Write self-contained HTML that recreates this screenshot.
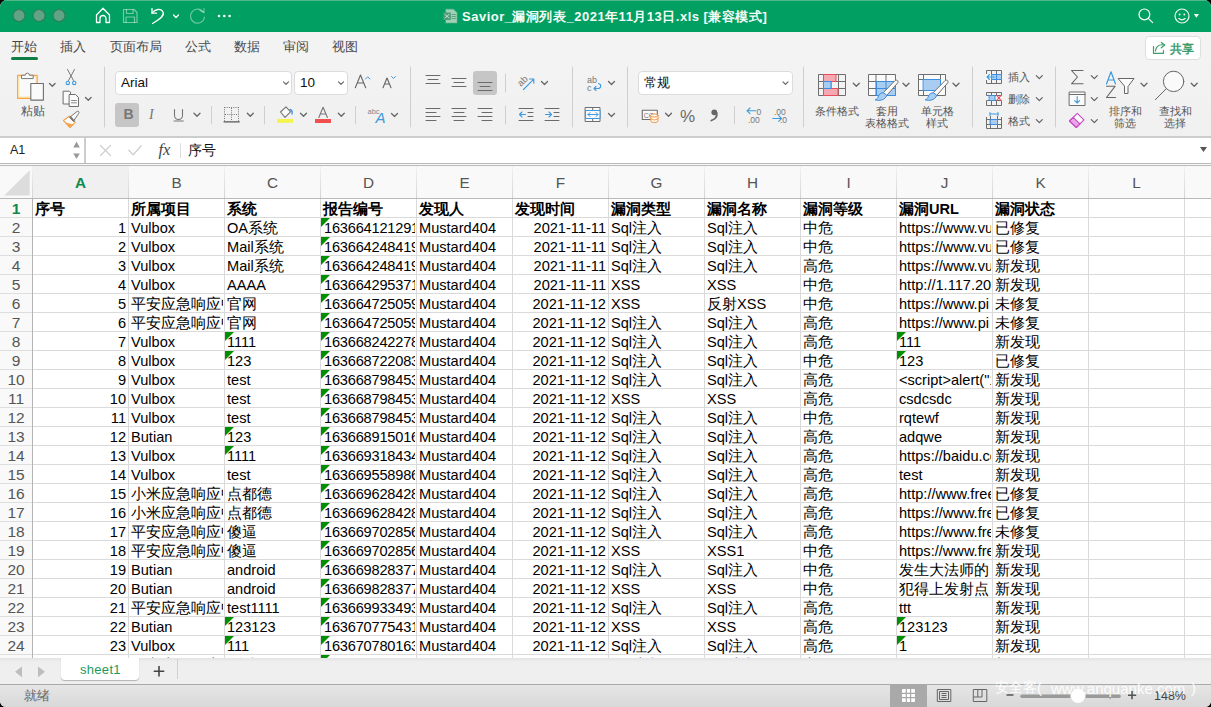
<!DOCTYPE html>
<html><head><meta charset="utf-8">
<style>
*{box-sizing:border-box}
html,body{margin:0;padding:0}
body{width:1211px;height:707px;overflow:hidden;position:relative;background:#000;font-family:"Liberation Sans",sans-serif;}
.a{position:absolute}
#win{position:absolute;left:0;top:0;width:1211px;height:707px;background:#f3f3f3;border-radius:7px 7px 6px 6px;overflow:hidden}
#title{position:absolute;left:0;top:0;width:1211px;height:32px;background:#01a062;border-top:1px solid #4fb888}
#ttxt{position:absolute;left:462px;top:7px;color:#f4fbf7;font-weight:bold;font-size:13px;white-space:nowrap;letter-spacing:0.5px}
.tab{position:absolute;top:39px;font-size:12.8px;color:#4a4a4a;white-space:nowrap}
#fbar{position:absolute;left:0;top:136px;width:1211px;height:27px;background:#fff;border-top:2px solid #cdcdcd}
#sheet{z-index:0;position:absolute;left:0;top:163px;width:1211px;height:495px;background:#fff;overflow:hidden}
#grid{position:absolute;left:32px;top:35px;width:1179px;height:460px;
 background-image:linear-gradient(to right,#dadada 1px,transparent 1px),linear-gradient(to bottom,#dadada 1px,transparent 1px);
 background-size:96px 19px;background-position:0 0}
#colh{z-index:2;position:absolute;left:0;top:0;width:1211px;height:36px;background:#f9f9f9;border-top:3px double #b9b9b9;border-bottom:1px solid #b9b9b9}
#rowh{z-index:1;position:absolute;left:0;top:35px;width:33px;height:460px;background:#f9f9f9;border-right:1px solid #b4b4b4;
 background-image:linear-gradient(to bottom,#dedede 1px,transparent 1px);background-size:32px 19px}
.ch{position:absolute;top:0;width:97px;height:32px;line-height:33px;text-align:center;font-size:15.3px;color:#555;background:linear-gradient(#f2f2f2,#d4d4d4) left top/1px 100% no-repeat}
.rn{position:absolute;left:0;width:32px;height:19px;line-height:22px;text-align:center;font-size:15.5px;color:#555}
.g{color:#0f8a4f;font-weight:bold}
.c{position:absolute;width:95px;height:19px;line-height:23px;font-size:14.6px;color:#000;white-space:nowrap;overflow:hidden;padding:0 2px 0 3px}
.c.r{text-align:right;padding-right:1px}
.c.b{font-weight:bold}
.z{font-size:15.2px;line-height:0}
.t{position:absolute;width:0;height:0;border-top:9px solid #008f00;border-right:9px solid transparent}
#tabbar{position:absolute;left:0;top:658px;width:1211px;height:26px;background:linear-gradient(#e3e3e3,#efefef 4px)}
#status{position:absolute;left:0;top:684px;width:1211px;height:23px;background:linear-gradient(#e6e6e6,#d8d8d8);border-top:1px solid #a9a9a9}
.lbl{position:absolute;font-size:10.6px;color:#555;white-space:nowrap;text-align:center;line-height:11.5px}
.box{position:absolute;background:#fff;border:1px solid #dcdcdc;border-radius:4px;font-size:12.5px;color:#111}
</style></head><body>
<div id="win">
<div class="a" style="left:0;top:64px;width:1211px;height:72px;background:linear-gradient(#f3f3f3,#f0f0f0)"></div>
<div id="title">
 <div id="ttxt">Savior_漏洞列表_2021年11月13日.xls [兼容模式]</div>
</div>
 <div class="tab" style="left:11px;color:#444">开始</div>
 <div class="a" style="left:11px;top:57px;width:27px;height:3px;border-radius:2px;background:#0f7d44"></div>
 <div class="tab" style="left:60px">插入</div>
 <div class="tab" style="left:110px">页面布局</div>
 <div class="tab" style="left:185px">公式</div>
 <div class="tab" style="left:234px">数据</div>
 <div class="tab" style="left:283px">审阅</div>
 <div class="tab" style="left:332px">视图</div>
 <div class="box" style="left:115px;top:71px;width:177px;height:24px;padding:3px 0 0 5px;font-size:13.5px">Arial</div>
<div class="box" style="left:294px;top:71px;width:54px;height:24px;padding:3px 0 0 5px;font-size:13.5px">10</div>
<div class="box" style="left:638px;top:71px;width:155px;height:24px;padding:3px 0 0 5px">常规</div>
<div class="a" style="left:115px;top:103px;width:24px;height:24px;background:#c6c6c6;border-radius:3px"></div>
<div class="a" style="left:473px;top:71px;width:24px;height:24px;background:#c6c6c6;border-radius:3px"></div>
<div class="lbl" style="left:18px;top:106px;width:30px;font-size:11.5px">粘贴</div>
<div class="lbl" style="left:807px;top:106px;width:60px">条件格式</div>
<div class="lbl" style="left:857px;top:106px;width:60px">套用<br>表格格式</div>
<div class="lbl" style="left:907px;top:106px;width:60px">单元格<br>样式</div>
<div class="lbl" style="left:1095px;top:106px;width:60px">排序和<br>筛选</div>
<div class="lbl" style="left:1145px;top:106px;width:60px">查找和<br>选择</div>
<div class="lbl" style="left:1008px;top:72px;font-size:11px">插入</div>
<div class="lbl" style="left:1008px;top:94px;font-size:11px">删除</div>
<div class="lbl" style="left:1008px;top:116px;font-size:11px">格式</div>
<div class="a" style="left:1145px;top:36px;width:56px;height:24px;background:#fff;border:1px solid #dedede;border-radius:4px"></div>
<div class="a" style="left:1170px;top:41px;font-size:12px;font-weight:bold;color:#3c9c6c">共享</div>

<div id="fbar">
 <div class="a" style="left:0;top:0;width:86px;height:26px;background:#fff;border-right:2px solid #cdcdcd"></div>
 <div class="a" style="left:10px;top:5px;font-size:12.5px;color:#222">A1</div>
 <div class="a" style="left:188px;top:4px;font-size:14px;color:#111">序号</div>
</div>
<div id="sheet">
 <div id="colh">
 <div class="a" style="left:33px;top:0;width:95px;height:32px;background:#f0f0f0"></div>
<div class="ch g" style="left:32px">A</div>
<div class="ch" style="left:128px">B</div>
<div class="ch" style="left:224px">C</div>
<div class="ch" style="left:320px">D</div>
<div class="ch" style="left:416px">E</div>
<div class="ch" style="left:512px">F</div>
<div class="ch" style="left:608px">G</div>
<div class="ch" style="left:704px">H</div>
<div class="ch" style="left:800px">I</div>
<div class="ch" style="left:896px">J</div>
<div class="ch" style="left:992px">K</div>
<div class="ch" style="left:1088px">L</div>
<div class="ch" style="left:1184px">M</div>
 </div>
 <div id="rowh"></div>
 <div class="a" style="left:0;top:35px;width:32px;height:20px;background:#f0f0f0;border-bottom:1px solid #dedede"></div>
 <div id="grid"></div>
 <div id="cells" class="a" style="z-index:3;left:0;top:-163px;width:1211px;height:658px">
<div class="c b" style="left:32px;top:198px"><span class="z">序号</span></div>
<div class="c b" style="left:128px;top:198px"><span class="z">所属项目</span></div>
<div class="c b" style="left:224px;top:198px"><span class="z">系统</span></div>
<div class="c b" style="left:320px;top:198px"><span class="z">报告编号</span></div>
<div class="c b" style="left:416px;top:198px"><span class="z">发现人</span></div>
<div class="c b" style="left:512px;top:198px"><span class="z">发现时间</span></div>
<div class="c b" style="left:608px;top:198px"><span class="z">漏洞类型</span></div>
<div class="c b" style="left:704px;top:198px"><span class="z">漏洞名称</span></div>
<div class="c b" style="left:800px;top:198px"><span class="z">漏洞等级</span></div>
<div class="c b" style="left:896px;top:198px"><span class="z">漏洞</span>URL</div>
<div class="c b" style="left:992px;top:198px"><span class="z">漏洞状态</span></div>
<div class="c r" style="left:32px;top:217px">1</div>
<div class="c" style="left:128px;top:217px">Vulbox</div>
<div class="c" style="left:224px;top:217px">OA<span class="z">系统</span></div>
<div class="c" style="left:320px;top:217px;letter-spacing:-0.2px;padding-left:4px">163664121291</div>
<div class="c" style="left:416px;top:217px">Mustard404</div>
<div class="c r" style="left:512px;top:217px">2021-11-11</div>
<div class="c" style="left:608px;top:217px">Sql<span class="z">注入</span></div>
<div class="c" style="left:704px;top:217px">Sql<span class="z">注入</span></div>
<div class="c" style="left:800px;top:217px"><span class="z">中危</span></div>
<div class="c" style="left:896px;top:217px">https://www.vulbox.com</div>
<div class="c" style="left:992px;top:217px"><span class="z">已修复</span></div>
<div class="t" style="left:321px;top:218px"></div>
<div class="c r" style="left:32px;top:236px">2</div>
<div class="c" style="left:128px;top:236px">Vulbox</div>
<div class="c" style="left:224px;top:236px">Mail<span class="z">系统</span></div>
<div class="c" style="left:320px;top:236px;letter-spacing:-0.2px;padding-left:4px">163664248419</div>
<div class="c" style="left:416px;top:236px">Mustard404</div>
<div class="c r" style="left:512px;top:236px">2021-11-11</div>
<div class="c" style="left:608px;top:236px">Sql<span class="z">注入</span></div>
<div class="c" style="left:704px;top:236px">Sql<span class="z">注入</span></div>
<div class="c" style="left:800px;top:236px"><span class="z">中危</span></div>
<div class="c" style="left:896px;top:236px">https://www.vulbox.com</div>
<div class="c" style="left:992px;top:236px"><span class="z">已修复</span></div>
<div class="t" style="left:321px;top:237px"></div>
<div class="c r" style="left:32px;top:255px">3</div>
<div class="c" style="left:128px;top:255px">Vulbox</div>
<div class="c" style="left:224px;top:255px">Mail<span class="z">系统</span></div>
<div class="c" style="left:320px;top:255px;letter-spacing:-0.2px;padding-left:4px">163664248419</div>
<div class="c" style="left:416px;top:255px">Mustard404</div>
<div class="c r" style="left:512px;top:255px">2021-11-11</div>
<div class="c" style="left:608px;top:255px">Sql<span class="z">注入</span></div>
<div class="c" style="left:704px;top:255px">Sql<span class="z">注入</span></div>
<div class="c" style="left:800px;top:255px"><span class="z">高危</span></div>
<div class="c" style="left:896px;top:255px">https://www.vulbox.com</div>
<div class="c" style="left:992px;top:255px"><span class="z">新发现</span></div>
<div class="t" style="left:321px;top:256px"></div>
<div class="c r" style="left:32px;top:274px">4</div>
<div class="c" style="left:128px;top:274px">Vulbox</div>
<div class="c" style="left:224px;top:274px">AAAA</div>
<div class="c" style="left:320px;top:274px;letter-spacing:-0.2px;padding-left:4px">163664295371</div>
<div class="c" style="left:416px;top:274px">Mustard404</div>
<div class="c r" style="left:512px;top:274px">2021-11-11</div>
<div class="c" style="left:608px;top:274px">XSS</div>
<div class="c" style="left:704px;top:274px">XSS</div>
<div class="c" style="left:800px;top:274px"><span class="z">中危</span></div>
<div class="c" style="left:896px;top:274px">http://1.117.20.1</div>
<div class="c" style="left:992px;top:274px"><span class="z">新发现</span></div>
<div class="t" style="left:321px;top:275px"></div>
<div class="c r" style="left:32px;top:293px">5</div>
<div class="c" style="left:128px;top:293px"><span class="z">平安应急响应中心</span></div>
<div class="c" style="left:224px;top:293px"><span class="z">官网</span></div>
<div class="c" style="left:320px;top:293px;letter-spacing:-0.2px;padding-left:4px">163664725059</div>
<div class="c" style="left:416px;top:293px">Mustard404</div>
<div class="c r" style="left:512px;top:293px">2021-11-12</div>
<div class="c" style="left:608px;top:293px">XSS</div>
<div class="c" style="left:704px;top:293px"><span class="z">反射</span>XSS</div>
<div class="c" style="left:800px;top:293px"><span class="z">中危</span></div>
<div class="c" style="left:896px;top:293px">https://www.pi</div>
<div class="c" style="left:992px;top:293px"><span class="z">未修复</span></div>
<div class="t" style="left:321px;top:294px"></div>
<div class="c r" style="left:32px;top:312px">6</div>
<div class="c" style="left:128px;top:312px"><span class="z">平安应急响应中心</span></div>
<div class="c" style="left:224px;top:312px"><span class="z">官网</span></div>
<div class="c" style="left:320px;top:312px;letter-spacing:-0.2px;padding-left:4px">163664725059</div>
<div class="c" style="left:416px;top:312px">Mustard404</div>
<div class="c r" style="left:512px;top:312px">2021-11-12</div>
<div class="c" style="left:608px;top:312px">Sql<span class="z">注入</span></div>
<div class="c" style="left:704px;top:312px">Sql<span class="z">注入</span></div>
<div class="c" style="left:800px;top:312px"><span class="z">高危</span></div>
<div class="c" style="left:896px;top:312px">https://www.pi</div>
<div class="c" style="left:992px;top:312px"><span class="z">未修复</span></div>
<div class="t" style="left:321px;top:313px"></div>
<div class="c r" style="left:32px;top:331px">7</div>
<div class="c" style="left:128px;top:331px">Vulbox</div>
<div class="c" style="left:224px;top:331px">1111</div>
<div class="c" style="left:320px;top:331px;letter-spacing:-0.2px;padding-left:4px">163668242278</div>
<div class="c" style="left:416px;top:331px">Mustard404</div>
<div class="c r" style="left:512px;top:331px">2021-11-12</div>
<div class="c" style="left:608px;top:331px">Sql<span class="z">注入</span></div>
<div class="c" style="left:704px;top:331px">Sql<span class="z">注入</span></div>
<div class="c" style="left:800px;top:331px"><span class="z">高危</span></div>
<div class="c" style="left:896px;top:331px">111</div>
<div class="c" style="left:992px;top:331px"><span class="z">新发现</span></div>
<div class="t" style="left:321px;top:332px"></div>
<div class="t" style="left:225px;top:332px"></div>
<div class="t" style="left:897px;top:332px"></div>
<div class="c r" style="left:32px;top:350px">8</div>
<div class="c" style="left:128px;top:350px">Vulbox</div>
<div class="c" style="left:224px;top:350px">123</div>
<div class="c" style="left:320px;top:350px;letter-spacing:-0.2px;padding-left:4px">163668722083</div>
<div class="c" style="left:416px;top:350px">Mustard404</div>
<div class="c r" style="left:512px;top:350px">2021-11-12</div>
<div class="c" style="left:608px;top:350px">Sql<span class="z">注入</span></div>
<div class="c" style="left:704px;top:350px">Sql<span class="z">注入</span></div>
<div class="c" style="left:800px;top:350px"><span class="z">中危</span></div>
<div class="c" style="left:896px;top:350px">123</div>
<div class="c" style="left:992px;top:350px"><span class="z">已修复</span></div>
<div class="t" style="left:321px;top:351px"></div>
<div class="t" style="left:225px;top:351px"></div>
<div class="t" style="left:897px;top:351px"></div>
<div class="c r" style="left:32px;top:369px">9</div>
<div class="c" style="left:128px;top:369px">Vulbox</div>
<div class="c" style="left:224px;top:369px">test</div>
<div class="c" style="left:320px;top:369px;letter-spacing:-0.2px;padding-left:4px">163668798453</div>
<div class="c" style="left:416px;top:369px">Mustard404</div>
<div class="c r" style="left:512px;top:369px">2021-11-12</div>
<div class="c" style="left:608px;top:369px">Sql<span class="z">注入</span></div>
<div class="c" style="left:704px;top:369px">Sql<span class="z">注入</span></div>
<div class="c" style="left:800px;top:369px"><span class="z">高危</span></div>
<div class="c" style="left:896px;top:369px">&lt;script&gt;alert("1")</div>
<div class="c" style="left:992px;top:369px"><span class="z">新发现</span></div>
<div class="t" style="left:321px;top:370px"></div>
<div class="c r" style="left:32px;top:388px">10</div>
<div class="c" style="left:128px;top:388px">Vulbox</div>
<div class="c" style="left:224px;top:388px">test</div>
<div class="c" style="left:320px;top:388px;letter-spacing:-0.2px;padding-left:4px">163668798453</div>
<div class="c" style="left:416px;top:388px">Mustard404</div>
<div class="c r" style="left:512px;top:388px">2021-11-12</div>
<div class="c" style="left:608px;top:388px">XSS</div>
<div class="c" style="left:704px;top:388px">XSS</div>
<div class="c" style="left:800px;top:388px"><span class="z">高危</span></div>
<div class="c" style="left:896px;top:388px">csdcsdc</div>
<div class="c" style="left:992px;top:388px"><span class="z">新发现</span></div>
<div class="t" style="left:321px;top:389px"></div>
<div class="c r" style="left:32px;top:407px">11</div>
<div class="c" style="left:128px;top:407px">Vulbox</div>
<div class="c" style="left:224px;top:407px">test</div>
<div class="c" style="left:320px;top:407px;letter-spacing:-0.2px;padding-left:4px">163668798453</div>
<div class="c" style="left:416px;top:407px">Mustard404</div>
<div class="c r" style="left:512px;top:407px">2021-11-12</div>
<div class="c" style="left:608px;top:407px">Sql<span class="z">注入</span></div>
<div class="c" style="left:704px;top:407px">Sql<span class="z">注入</span></div>
<div class="c" style="left:800px;top:407px"><span class="z">中危</span></div>
<div class="c" style="left:896px;top:407px">rqtewf</div>
<div class="c" style="left:992px;top:407px"><span class="z">新发现</span></div>
<div class="t" style="left:321px;top:408px"></div>
<div class="c r" style="left:32px;top:426px">12</div>
<div class="c" style="left:128px;top:426px">Butian</div>
<div class="c" style="left:224px;top:426px">123</div>
<div class="c" style="left:320px;top:426px;letter-spacing:-0.2px;padding-left:4px">163668915016</div>
<div class="c" style="left:416px;top:426px">Mustard404</div>
<div class="c r" style="left:512px;top:426px">2021-11-12</div>
<div class="c" style="left:608px;top:426px">Sql<span class="z">注入</span></div>
<div class="c" style="left:704px;top:426px">Sql<span class="z">注入</span></div>
<div class="c" style="left:800px;top:426px"><span class="z">高危</span></div>
<div class="c" style="left:896px;top:426px">adqwe</div>
<div class="c" style="left:992px;top:426px"><span class="z">新发现</span></div>
<div class="t" style="left:321px;top:427px"></div>
<div class="t" style="left:225px;top:427px"></div>
<div class="c r" style="left:32px;top:445px">13</div>
<div class="c" style="left:128px;top:445px">Vulbox</div>
<div class="c" style="left:224px;top:445px">1111</div>
<div class="c" style="left:320px;top:445px;letter-spacing:-0.2px;padding-left:4px">163669318434</div>
<div class="c" style="left:416px;top:445px">Mustard404</div>
<div class="c r" style="left:512px;top:445px">2021-11-12</div>
<div class="c" style="left:608px;top:445px">Sql<span class="z">注入</span></div>
<div class="c" style="left:704px;top:445px">Sql<span class="z">注入</span></div>
<div class="c" style="left:800px;top:445px"><span class="z">高危</span></div>
<div class="c" style="left:896px;top:445px">https://baidu.com</div>
<div class="c" style="left:992px;top:445px"><span class="z">新发现</span></div>
<div class="t" style="left:321px;top:446px"></div>
<div class="t" style="left:225px;top:446px"></div>
<div class="c r" style="left:32px;top:464px">14</div>
<div class="c" style="left:128px;top:464px">Vulbox</div>
<div class="c" style="left:224px;top:464px">test</div>
<div class="c" style="left:320px;top:464px;letter-spacing:-0.2px;padding-left:4px">163669558986</div>
<div class="c" style="left:416px;top:464px">Mustard404</div>
<div class="c r" style="left:512px;top:464px">2021-11-12</div>
<div class="c" style="left:608px;top:464px">Sql<span class="z">注入</span></div>
<div class="c" style="left:704px;top:464px">Sql<span class="z">注入</span></div>
<div class="c" style="left:800px;top:464px"><span class="z">高危</span></div>
<div class="c" style="left:896px;top:464px">test</div>
<div class="c" style="left:992px;top:464px"><span class="z">新发现</span></div>
<div class="t" style="left:321px;top:465px"></div>
<div class="c r" style="left:32px;top:483px">15</div>
<div class="c" style="left:128px;top:483px"><span class="z">小米应急响应中心</span></div>
<div class="c" style="left:224px;top:483px"><span class="z">点都德</span></div>
<div class="c" style="left:320px;top:483px;letter-spacing:-0.2px;padding-left:4px">163669628428</div>
<div class="c" style="left:416px;top:483px">Mustard404</div>
<div class="c r" style="left:512px;top:483px">2021-11-12</div>
<div class="c" style="left:608px;top:483px">Sql<span class="z">注入</span></div>
<div class="c" style="left:704px;top:483px">Sql<span class="z">注入</span></div>
<div class="c" style="left:800px;top:483px"><span class="z">高危</span></div>
<div class="c" style="left:896px;top:483px">http://www.freebuf</div>
<div class="c" style="left:992px;top:483px"><span class="z">已修复</span></div>
<div class="t" style="left:321px;top:484px"></div>
<div class="c r" style="left:32px;top:502px">16</div>
<div class="c" style="left:128px;top:502px"><span class="z">小米应急响应中心</span></div>
<div class="c" style="left:224px;top:502px"><span class="z">点都德</span></div>
<div class="c" style="left:320px;top:502px;letter-spacing:-0.2px;padding-left:4px">163669628428</div>
<div class="c" style="left:416px;top:502px">Mustard404</div>
<div class="c r" style="left:512px;top:502px">2021-11-12</div>
<div class="c" style="left:608px;top:502px">Sql<span class="z">注入</span></div>
<div class="c" style="left:704px;top:502px">Sql<span class="z">注入</span></div>
<div class="c" style="left:800px;top:502px"><span class="z">高危</span></div>
<div class="c" style="left:896px;top:502px">https://www.freebuf</div>
<div class="c" style="left:992px;top:502px"><span class="z">已修复</span></div>
<div class="t" style="left:321px;top:503px"></div>
<div class="c r" style="left:32px;top:521px">17</div>
<div class="c" style="left:128px;top:521px"><span class="z">平安应急响应中心</span></div>
<div class="c" style="left:224px;top:521px"><span class="z">傻逼</span></div>
<div class="c" style="left:320px;top:521px;letter-spacing:-0.2px;padding-left:4px">163669702856</div>
<div class="c" style="left:416px;top:521px">Mustard404</div>
<div class="c r" style="left:512px;top:521px">2021-11-12</div>
<div class="c" style="left:608px;top:521px">Sql<span class="z">注入</span></div>
<div class="c" style="left:704px;top:521px">Sql<span class="z">注入</span></div>
<div class="c" style="left:800px;top:521px"><span class="z">高危</span></div>
<div class="c" style="left:896px;top:521px">https://www.freebuf</div>
<div class="c" style="left:992px;top:521px"><span class="z">未修复</span></div>
<div class="t" style="left:321px;top:522px"></div>
<div class="c r" style="left:32px;top:540px">18</div>
<div class="c" style="left:128px;top:540px"><span class="z">平安应急响应中心</span></div>
<div class="c" style="left:224px;top:540px"><span class="z">傻逼</span></div>
<div class="c" style="left:320px;top:540px;letter-spacing:-0.2px;padding-left:4px">163669702856</div>
<div class="c" style="left:416px;top:540px">Mustard404</div>
<div class="c r" style="left:512px;top:540px">2021-11-12</div>
<div class="c" style="left:608px;top:540px">XSS</div>
<div class="c" style="left:704px;top:540px">XSS1</div>
<div class="c" style="left:800px;top:540px"><span class="z">中危</span></div>
<div class="c" style="left:896px;top:540px">https://www.freebuf</div>
<div class="c" style="left:992px;top:540px"><span class="z">新发现</span></div>
<div class="t" style="left:321px;top:541px"></div>
<div class="c r" style="left:32px;top:559px">19</div>
<div class="c" style="left:128px;top:559px">Butian</div>
<div class="c" style="left:224px;top:559px">android</div>
<div class="c" style="left:320px;top:559px;letter-spacing:-0.2px;padding-left:4px">163669828377</div>
<div class="c" style="left:416px;top:559px">Mustard404</div>
<div class="c r" style="left:512px;top:559px">2021-11-12</div>
<div class="c" style="left:608px;top:559px">Sql<span class="z">注入</span></div>
<div class="c" style="left:704px;top:559px">Sql<span class="z">注入</span></div>
<div class="c" style="left:800px;top:559px"><span class="z">中危</span></div>
<div class="c" style="left:896px;top:559px"><span class="z">发生大法师的</span></div>
<div class="c" style="left:992px;top:559px"><span class="z">新发现</span></div>
<div class="t" style="left:321px;top:560px"></div>
<div class="c r" style="left:32px;top:578px">20</div>
<div class="c" style="left:128px;top:578px">Butian</div>
<div class="c" style="left:224px;top:578px">android</div>
<div class="c" style="left:320px;top:578px;letter-spacing:-0.2px;padding-left:4px">163669828377</div>
<div class="c" style="left:416px;top:578px">Mustard404</div>
<div class="c r" style="left:512px;top:578px">2021-11-12</div>
<div class="c" style="left:608px;top:578px">XSS</div>
<div class="c" style="left:704px;top:578px">XSS</div>
<div class="c" style="left:800px;top:578px"><span class="z">中危</span></div>
<div class="c" style="left:896px;top:578px"><span class="z">犯得上发射点</span></div>
<div class="c" style="left:992px;top:578px"><span class="z">新发现</span></div>
<div class="t" style="left:321px;top:579px"></div>
<div class="c r" style="left:32px;top:597px">21</div>
<div class="c" style="left:128px;top:597px"><span class="z">平安应急响应中心</span></div>
<div class="c" style="left:224px;top:597px">test1111</div>
<div class="c" style="left:320px;top:597px;letter-spacing:-0.2px;padding-left:4px">163669933493</div>
<div class="c" style="left:416px;top:597px">Mustard404</div>
<div class="c r" style="left:512px;top:597px">2021-11-12</div>
<div class="c" style="left:608px;top:597px">Sql<span class="z">注入</span></div>
<div class="c" style="left:704px;top:597px">Sql<span class="z">注入</span></div>
<div class="c" style="left:800px;top:597px"><span class="z">高危</span></div>
<div class="c" style="left:896px;top:597px">ttt</div>
<div class="c" style="left:992px;top:597px"><span class="z">新发现</span></div>
<div class="t" style="left:321px;top:598px"></div>
<div class="c r" style="left:32px;top:616px">22</div>
<div class="c" style="left:128px;top:616px">Butian</div>
<div class="c" style="left:224px;top:616px">123123</div>
<div class="c" style="left:320px;top:616px;letter-spacing:-0.2px;padding-left:4px">163670775431</div>
<div class="c" style="left:416px;top:616px">Mustard404</div>
<div class="c r" style="left:512px;top:616px">2021-11-12</div>
<div class="c" style="left:608px;top:616px">XSS</div>
<div class="c" style="left:704px;top:616px">XSS</div>
<div class="c" style="left:800px;top:616px"><span class="z">高危</span></div>
<div class="c" style="left:896px;top:616px">123123</div>
<div class="c" style="left:992px;top:616px"><span class="z">新发现</span></div>
<div class="t" style="left:321px;top:617px"></div>
<div class="t" style="left:225px;top:617px"></div>
<div class="t" style="left:897px;top:617px"></div>
<div class="c r" style="left:32px;top:635px">23</div>
<div class="c" style="left:128px;top:635px">Vulbox</div>
<div class="c" style="left:224px;top:635px">111</div>
<div class="c" style="left:320px;top:635px;letter-spacing:-0.2px;padding-left:4px">163670780163</div>
<div class="c" style="left:416px;top:635px">Mustard404</div>
<div class="c r" style="left:512px;top:635px">2021-11-12</div>
<div class="c" style="left:608px;top:635px">Sql<span class="z">注入</span></div>
<div class="c" style="left:704px;top:635px">Sql<span class="z">注入</span></div>
<div class="c" style="left:800px;top:635px"><span class="z">高危</span></div>
<div class="c" style="left:896px;top:635px">1</div>
<div class="c" style="left:992px;top:635px"><span class="z">新发现</span></div>
<div class="t" style="left:321px;top:636px"></div>
<div class="t" style="left:225px;top:636px"></div>
<div class="t" style="left:897px;top:636px"></div>
<div class="c r" style="left:32px;top:654px">24</div>
<div class="c" style="left:128px;top:654px"><span class="z">平安应急响应中心</span></div>
<div class="c" style="left:224px;top:654px"><span class="z">测试</span></div>
<div class="c" style="left:320px;top:654px;letter-spacing:-0.2px;padding-left:4px">163670780163</div>
<div class="c" style="left:416px;top:654px">Mustard404</div>
<div class="c r" style="left:512px;top:654px">2021-11-12</div>
<div class="c" style="left:608px;top:654px">Sql<span class="z">注入</span></div>
<div class="c" style="left:704px;top:654px">Sql<span class="z">注入</span></div>
<div class="c" style="left:800px;top:654px"><span class="z">高危</span></div>
<div class="c" style="left:896px;top:654px">1</div>
<div class="c" style="left:992px;top:654px"><span class="z">新发现</span></div>
<div class="t" style="left:321px;top:655px"></div>
<div class="rn g" style="top:198px">1</div>
<div class="rn" style="top:217px">2</div>
<div class="rn" style="top:236px">3</div>
<div class="rn" style="top:255px">4</div>
<div class="rn" style="top:274px">5</div>
<div class="rn" style="top:293px">6</div>
<div class="rn" style="top:312px">7</div>
<div class="rn" style="top:331px">8</div>
<div class="rn" style="top:350px">9</div>
<div class="rn" style="top:369px">10</div>
<div class="rn" style="top:388px">11</div>
<div class="rn" style="top:407px">12</div>
<div class="rn" style="top:426px">13</div>
<div class="rn" style="top:445px">14</div>
<div class="rn" style="top:464px">15</div>
<div class="rn" style="top:483px">16</div>
<div class="rn" style="top:502px">17</div>
<div class="rn" style="top:521px">18</div>
<div class="rn" style="top:540px">19</div>
<div class="rn" style="top:559px">20</div>
<div class="rn" style="top:578px">21</div>
<div class="rn" style="top:597px">22</div>
<div class="rn" style="top:616px">23</div>
<div class="rn" style="top:635px">24</div>
<div class="rn" style="top:654px">25</div>
 </div>
</div>
<div id="tabbar">
 <div class="a" style="left:61px;top:0;width:78px;height:22px;background:#fff;border-radius:0 0 4px 4px;box-shadow:0 1px 1px rgba(0,0,0,0.25)"></div>
 <div class="a" style="left:80px;top:4px;font-size:13px;color:#1d9a5c;letter-spacing:0.3px">sheet1</div>
 <div class="a" style="left:177px;top:1px;width:1px;height:20px;background:#d0d0d0"></div>
</div>
<div id="status">
 <div class="a" style="left:24px;top:2px;font-size:13px;color:#666">就绪</div>
 <div class="a" style="left:890px;top:0;width:37px;height:23px;background:#a9a9a9"></div>
 <div class="a" style="left:1154px;top:4px;font-size:12.5px;color:#444">148%</div>
</div>
<svg class="a" style="left:0;top:0" width="1211" height="707" viewBox="0 0 1211 707" fill="none" stroke-linecap="round" stroke-linejoin="round">
<!-- traffic lights -->
<g fill="#62a386" stroke="#2f7f59" stroke-width="1.1">
<circle cx="19" cy="15.5" r="6"/><circle cx="39" cy="15.5" r="6"/><circle cx="59" cy="15.5" r="6"/>
</g>
<!-- home -->
<g stroke="#fff" stroke-width="1.3">
<path d="M96.5 15 L103 8.3 L109.5 15 V22.5 H106 V18.5 A3 3 0 0 0 100 18.5 V22.5 H96.5 Z"/>
</g>
<!-- save disabled -->
<g stroke="rgba(255,255,255,0.45)" stroke-width="1.2">
<path d="M123.5 9.5 H134 L137 12.5 V22.5 H123.5 Z"/><path d="M126.5 9.5 V13.5 H133 V9.5"/><path d="M126 22.5 V17 H134.5 V22.5"/>
</g>
<!-- undo -->
<g stroke="#fff" stroke-width="1.3">
<path d="M152 13 C155 9,161 8,163 12 C164.5 15,162 18,152.5 23.5"/><path d="M152 8.5 V13.2 H156.5"/>
<path d="M173.5 15 L176 17.5 L178.5 15"/>
</g>
<!-- redo disabled -->
<g stroke="rgba(255,255,255,0.4)" stroke-width="1.2">
<path d="M203.5 12.5 A7 7 0 1 0 204.5 17"/><path d="M200 10.5 L204 12.5 L204 8.5"/>
</g>
<g fill="#fff"><circle cx="219" cy="16" r="1.3"/><circle cx="224.3" cy="16" r="1.3"/><circle cx="229.6" cy="16" r="1.3"/></g>
<!-- doc icon -->
<g>
<path d="M446 9.2 H453.5 L457 12.7 V23 H446 Z" fill="#9ed1b6" stroke="#6db391" stroke-width="0.6"/>
<rect x="443.3" y="12.5" width="7.5" height="7.5" fill="#4e9b76"/>
<path d="M445 14.5 L449 18 M449 14.5 L445 18" stroke="#cfe9dc" stroke-width="0.9"/>
<path d="M452 14.5 H455.5 M452 16.5 H455.5 M452 18.5 H455.5" stroke="#4e9b76" stroke-width="0.8"/>
</g>
<!-- search -->
<g stroke="#fff" stroke-width="1.2"><circle cx="1144.4" cy="14.4" r="5.4"/><path d="M1148.3 18.3 L1152.7 22.7"/></g>
<!-- smiley -->
<g stroke="#f0f8f4" stroke-width="1.2"><circle cx="1182" cy="16" r="7"/><path d="M1178.8 18.6 Q1182 21 1185.2 18.6"/></g>
<g fill="#f0f8f4"><circle cx="1179.6" cy="14.5" r="0.9"/><circle cx="1184.3" cy="14.5" r="0.9"/><path d="M1193.8 14 H1199 L1196.4 17.7 Z"/></g>

<!-- share icon -->
<g stroke="#3c9c6c" stroke-width="1.2"><path d="M1153.5 46.5 V53.3 H1163.5 V50.5"/><path d="M1155.5 51 C1156 46.5,1159 44.5,1163 44.8"/><path d="M1161.3 42.5 L1164.8 45 L1161.3 47.8"/></g>

<!-- separators -->
<g stroke="#cfcfcf" stroke-width="1">
<path d="M104.5 67 V127"/><path d="M410.5 67 V127"/><path d="M572.5 67 V127"/><path d="M627.5 67 V127"/><path d="M803.5 67 V127"/><path d="M972.5 67 V127"/><path d="M1055.5 67 V127"/>
<path d="M211.5 106.5 V124"/><path d="M264.5 106.5 V124"/><path d="M355.5 106.5 V124"/><path d="M505.5 74 V92"/><path d="M505.5 106 V124"/><path d="M734.5 106.5 V123.5"/>
</g>

<!-- clipboard -->
<rect x="17.6" y="75.4" width="19.6" height="23" fill="#fdebb8" stroke="#f5a34d" stroke-width="1.1"/>
<rect x="19.6" y="77.4" width="15.6" height="19" fill="#fafafa" stroke="none"/>
<path d="M21.5 78.2 V75.2 H25.3 A2 2 0 0 1 29.4 75.2 H33.2 V78.2 Z" fill="#fafafa" stroke="#7a7a7a" stroke-width="1"/>
<rect x="30.8" y="83.5" width="12.6" height="16.6" fill="#fafafa" stroke="#6e6e6e" stroke-width="1.1"/>
<!-- chevrons -->
<g stroke="#666" stroke-width="1.3">
<path d="M49.5 83.5 L52.3 86.3 L55.1 83.5"/>
<path d="M85.5 97.5 L88.3 100.3 L91.1 97.5"/>
<path d="M283.5 81.8 L286 84.3 L288.5 81.8" stroke-width="1.2"/>
<path d="M338.5 81.8 L341 84.3 L343.5 81.8" stroke-width="1.2"/>
<path d="M783 81.8 L785.5 84.3 L788 81.8" stroke-width="1.2"/>
<path d="M194 113.3 L197 116.3 L200 113.3"/>
<path d="M247.3 113.3 L250.3 116.3 L253.3 113.3"/>
<path d="M300.5 113.3 L303.5 116.3 L306.5 113.3"/>
<path d="M338.3 113.3 L341.3 116.3 L344.3 113.3"/>
<path d="M391.5 113.5 L394.5 116.5 L397.5 113.5"/>
<path d="M541.5 81.5 L544.5 84.5 L547.5 81.5"/>
<path d="M608.5 81.5 L611.5 84.5 L614.5 81.5"/>
<path d="M608.5 113.5 L611.5 116.5 L614.5 113.5"/>
<path d="M665.5 113.3 L668.5 116.3 L671.5 113.3"/>
<path d="M853.3 83.3 L856.3 86.3 L859.3 83.3"/>
<path d="M903 83.3 L906 86.3 L909 83.3"/>
<path d="M953 83.3 L956 86.3 L959 83.3"/>
<path d="M1036.3 75.6 L1039.3 78.6 L1042.3 75.6"/>
<path d="M1036.3 97.6 L1039.3 100.6 L1042.3 97.6"/>
<path d="M1036.3 119.6 L1039.3 122.6 L1042.3 119.6"/>
<path d="M1091.3 75.6 L1094.3 78.6 L1097.3 75.6"/>
<path d="M1091.3 97.6 L1094.3 100.6 L1097.3 97.6"/>
<path d="M1091.3 119.6 L1094.3 122.6 L1097.3 119.6"/>
<path d="M1141 83.3 L1144 86.3 L1147 83.3"/>
<path d="M1191.2 83.3 L1194.2 86.3 L1197.2 83.3"/>
</g>
<!-- scissors -->
<g stroke="#777" stroke-width="1"><path d="M67.5 69.5 L73.5 80.5 M74.5 69.5 L68.5 80.5"/></g>
<g stroke="#3d9ae0" stroke-width="1.1"><circle cx="67.8" cy="82.9" r="1.7"/><circle cx="74.2" cy="82.9" r="1.7"/></g>
<!-- copy -->
<g stroke="#6e6e6e" stroke-width="1" fill="#fafafa">
<path d="M63.5 91.2 H69.5 L70.5 92.2 V104 H63.5 Z"/>
<path d="M69.5 94.5 H75.5 L78.5 97.5 V106.5 H69.5 Z"/>
<path d="M71.5 100.5 H76.5 M71.5 102.8 H76.5" stroke-width="0.8"/>
</g>
<!-- format painter -->
<path d="M63.5 120.5 L69.5 116 L75.3 122.3 L70 127.4 Z" fill="#fafafa" stroke="#f5a04a" stroke-width="1.1"/>
<path d="M66.3 123.3 L73.2 124.8 L70 127.4 Z" fill="#f5a04a" stroke="#f5a04a" stroke-width="0.8"/>
<path d="M69.8 117.2 L77.2 111.4 C78.5 110.8,79.5 112,78.8 113.2 L73.6 121 Z" fill="#fafafa" stroke="#777" stroke-width="1"/>
<path d="M70.5 116.8 L74 121" stroke="#777" stroke-width="1.6"/>
<!-- font grow/shrink -->
<g stroke="#666" stroke-width="1.1"><path d="M355.3 87.8 L360.5 75 L365.7 87.8 M357.3 83 H363.7"/><path d="M383 87.8 L387 78 L391 87.8 M384.6 84 H389.4"/></g>
<g stroke="#3d9ae0" stroke-width="1"><path d="M365.5 79 L367.7 76.8 L369.9 79"/><path d="M391.5 76.5 L393.5 78.5 L395.5 76.5"/></g>
<!-- B I U -->
<text x="123.5" y="119" font-family="Liberation Sans" font-weight="bold" font-size="14" fill="#777" stroke="none">B</text>
<text x="149" y="119.2" font-family="Liberation Serif" font-style="italic" font-size="14" fill="#777" stroke="none">I</text>
<g stroke="#777" stroke-width="1.1"><path d="M174.5 109.5 V115.5 A4 4 0 0 0 182.5 115.5 V109.5"/><path d="M174 121 H183.3"/></g>
<!-- borders -->
<g stroke="#777" stroke-width="1" stroke-dasharray="1 1.2" stroke-linecap="butt">
<path d="M224.5 107 V121 M238.5 107 V121 M224.5 107.5 H239 M231.5 108 V121 M225 114.5 H238.5"/>
</g>
<path d="M224 121.8 H239.3" stroke="#555" stroke-width="1.2"/>
<!-- fill -->
<rect x="277" y="119" width="16" height="3.8" fill="#f4f44c" stroke="none"/>
<path d="M280.5 112 L286 106.8 L290.5 111.8 L285 117.3 Z" fill="#fafafa" stroke="#777" stroke-width="1.1"/>
<path d="M290 109.5 C292 110,292.5 112,292 114" stroke="#3d8ee0" stroke-width="1.3"/>
<!-- font color -->
<rect x="315" y="119" width="16" height="4" fill="#f04f4f" stroke="none"/>
<path d="M318.8 117.5 L323.1 107.3 L327.4 117.5 M320.3 114 H325.9" stroke="#777" stroke-width="1.1"/>
<!-- abc A -->
<text x="367.5" y="113.7" font-family="Liberation Sans" font-size="7.5" fill="#888" stroke="none">abc</text>
<text x="375.5" y="123.2" font-family="Liberation Sans" font-style="italic" font-size="15" fill="#3d9ae0" stroke="none">A</text>

<!-- align -->
<g stroke="#6a6a6a" stroke-width="1.05">
<path d="M426 75.5 H440 M428 79.5 H438 M426 83.5 H440"/>
<path d="M452 78.5 H466 M454 82.5 H464 M452 86.5 H466"/>
<path d="M478 82.5 H492 M480 86.5 H490 M478 90.5 H492"/>
<path d="M426 108.5 H440 M426 112.5 H436 M426 116.5 H440 M426 120.5 H436"/>
<path d="M452 108.5 H466 M454 112.5 H464 M452 116.5 H466 M454 120.5 H464"/>
<path d="M478 108.5 H492 M482 112.5 H492 M478 116.5 H492 M482 120.5 H492"/>
<path d="M519 108.5 H533 M528 112.5 H533 M528 116.5 H533 M519 120.5 H533"/>
<path d="M545 108.5 H559 M554 112.5 H559 M554 116.5 H559 M545 120.5 H559"/>
</g>
<g stroke="#3d9ae0" stroke-width="1.1">
<path d="M519.5 114.5 H525.5 M522 112 L519.5 114.5 L522 117"/>
<path d="M545.5 114.5 H551.5 M549 112 L551.5 114.5 L549 117"/>
<path d="M523.5 89.5 L533.8 79.2 M529.5 79 H533.8 V83.3"/>
</g>
<text x="0" y="0" transform="translate(521 87) rotate(-45)" font-family="Liberation Sans" font-size="9.5" fill="#777" stroke="none">ab</text>
<!-- wrap -->
<text x="587" y="83" font-family="Liberation Sans" font-size="9" fill="#777" stroke="none">ab</text>
<text x="587" y="90.5" font-family="Liberation Sans" font-size="9" fill="#777" stroke="none">c</text>
<g stroke="#3d9ae0" stroke-width="1.1"><path d="M598.5 83.5 C601.5 84,601.5 88.5,598 88.5 H594 M596 86.5 L594 88.5 L596 90.5"/></g>
<!-- merge -->
<rect x="585.5" y="107.5" width="14.5" height="14" fill="#fafafa" stroke="#6e6e6e" stroke-width="1"/>
<path d="M592.7 108 V121" stroke="#6e6e6e" stroke-width="1"/>
<rect x="585.5" y="110.5" width="14.5" height="8" fill="#fafafa" stroke="#3d9ae0" stroke-width="1.1"/>
<path d="M588 114.5 H598 M590 112.5 L588 114.5 L590 116.5 M596 112.5 L598 114.5 L596 116.5" stroke="#3d9ae0" stroke-width="1"/>
<!-- currency -->
<rect x="642.3" y="110.3" width="15" height="9.2" fill="#fafafa" stroke="#6e6e6e" stroke-width="1.1"/>
<text x="643.8" y="117.6" font-family="Liberation Sans" font-size="7" fill="#777" stroke="none">CO</text>
<path d="M650.8 115.5 V121 A3.6 1.6 0 0 0 658 121 V115.5" fill="#fff6ea" stroke="#f2994a" stroke-width="1"/>
<ellipse cx="654.4" cy="115.5" rx="3.6" ry="1.6" fill="#fff6ea" stroke="#f2994a" stroke-width="1"/>
<path d="M650.8 118.3 A3.6 1.6 0 0 0 658 118.3" stroke="#f2994a" stroke-width="0.9"/>
<!-- percent / comma -->
<text x="680" y="121.5" font-family="Liberation Sans" font-size="17" fill="#6a6a6a" stroke="none">%</text>
<circle cx="714.3" cy="112.3" r="2.9" fill="#666" stroke="none"/><path d="M716.7 113 C717.3 116.5,715 119.3,711.3 120.5" stroke="#666" stroke-width="1.8"/>
<!-- decimal -->
<g font-family="Liberation Sans" font-size="8.5" fill="#777" stroke="none">
<text x="756.5" y="114.5">0</text><text x="748" y="122.5">.00</text>
<text x="774" y="114.5">.00</text><text x="780" y="122.5">.0</text>
</g>
<g stroke="#3d9ae0" stroke-width="1.1"><path d="M747 110.8 H756 M750 108 L747 110.8 L750 113.6"/><path d="M772.8 118.5 H781.5 M778.7 115.7 L781.5 118.5 L778.7 121.3"/></g>

<!-- cond format -->
<g stroke="#6e6e6e" stroke-width="1" stroke-linecap="butt">
<rect x="818.5" y="74.5" width="27" height="21"/><path d="M818.5 81.5 H845.5 M818.5 88.5 H845.5 M823.5 74.5 V95.5 M831 74.5 V95.5 M838.5 74.5 V95.5"/>
</g>
<g stroke="#ec4b5a" stroke-width="1" stroke-linecap="butt" fill="#f7a9b3"><path d="M823.5 74.5 H836 V81.5 H823.5 Z"/><path d="M823.5 88.5 H838 V95.5 H823.5 Z"/></g>
<path d="M823.5 81.5 H831 V88.5 H823.5 Z" fill="#a8cdf0" stroke="#3d8ee0" stroke-width="1" stroke-linecap="butt"/>
<!-- table format -->
<g stroke="#6e6e6e" stroke-width="1" stroke-linecap="butt">
<rect x="868.5" y="74.5" width="27" height="21" fill="#fafafa"/><path d="M868.5 81.5 H895.5 M868.5 88.5 H876 M876 74.5 V95.5 M886 74.5 V81.5"/>
</g>
<path d="M876.5 81.5 H895.5 V95.5 H876.5 Z" fill="#a8cdf0" stroke="#3d8ee0" stroke-width="1" stroke-linecap="butt"/>
<path d="M876.5 88.5 H895.5 M886 81.5 V95.5" stroke="#3d8ee0" stroke-width="1" stroke-linecap="butt"/>
<path d="M883.3 92.6 L895 80.6 C896.8 79.2,899 81.2,897.6 83 L886.6 95.6 Z" fill="#fafafa" stroke="#6e6e6e" stroke-width="1"/>
<path d="M883.3 92.8 C880 92.6,878.6 95,878 97.4 C877.2 98.9,876.2 99.5,875 99.8 C879 100.9,885.2 100.6,886.6 95.6 Z" fill="#a8cdf0" stroke="#3d8ee0" stroke-width="1"/>
<!-- cell styles -->
<g stroke="#6e6e6e" stroke-width="1" stroke-linecap="butt">
<rect x="918.5" y="74.5" width="27" height="21" fill="#fafafa"/><path d="M918.5 79.5 H923.5 M918.5 90.5 H923.5 M923.5 74.5 V79.5 M940.5 74.5 V79.5 M923.5 90.5 V95.5"/>
</g>
<rect x="923.5" y="79.5" width="17" height="11" fill="#a8cdf0" stroke="#3d8ee0" stroke-width="1"/>
<path d="M933.3 92.6 L945 80.6 C946.8 79.2,949 81.2,947.6 83 L936.6 95.6 Z" fill="#fafafa" stroke="#6e6e6e" stroke-width="1"/>
<path d="M933.3 92.8 C930 92.6,928.6 95,928 97.4 C927.2 98.9,926.2 99.5,925 99.8 C929 100.9,935.2 100.6,936.6 95.6 Z" fill="#a8cdf0" stroke="#3d8ee0" stroke-width="1"/>
<!-- insert -->
<g stroke="#6e6e6e" stroke-width="1" stroke-linecap="butt">
<path d="M986.5 70.5 V83.5 H1001.5 V70.5 H986.5 M986.5 74.5 H1001.5 M986.5 79.5 H1001.5 M991.5 70.5 V83.5 M996.5 70.5 V83.5"/>
</g>
<rect x="991.5" y="74.5" width="10" height="5" fill="#a8cdf0" stroke="#3d8ee0" stroke-width="1"/>
<path d="M996.5 74.5 V79.5" stroke="#3d8ee0" stroke-width="1"/>
<rect x="986" y="74" width="5" height="6" fill="#fafafa" stroke="none"/>
<path d="M987 77 H994 M989.5 74.5 L987 77 L989.5 79.5" stroke="#3d9ae0" stroke-width="1.1"/>
<!-- delete -->
<g stroke="#6e6e6e" stroke-width="1" stroke-linecap="butt">
<path d="M986.5 95.5 V92.5 H1001.5 V95.5 M986.5 100.5 V105.5 H1001.5 V100.5 M986.5 95.5 H1001.5 M986.5 100.5 H1001.5 M991.5 92.5 V95.5 M996.5 92.5 V95.5 M991.5 100.5 V105.5 M996.5 100.5 V105.5"/>
</g>
<rect x="986" y="96" width="16" height="4" fill="#f3f3f3" stroke="none"/>
<rect x="989.5" y="95.5" width="5.5" height="5" fill="#a8cdf0" stroke="#3d8ee0" stroke-width="1"/>
<path d="M996.8 95.5 L1001 100.3 M1001 95.5 L996.8 100.3" stroke="#f0505a" stroke-width="1.1"/>
<!-- format cells -->
<g stroke="#6e6e6e" stroke-width="1" stroke-linecap="butt">
<path d="M986.5 117 V128.5 H1001.5 V117 M986.5 119.5 H1001.5 M986.5 124.5 H1001.5 M990.5 116 V128.5 M997.5 116 V128.5"/>
</g>
<rect x="990.5" y="119.5" width="7" height="5" fill="#a8cdf0" stroke="#3d8ee0" stroke-width="1"/>
<path d="M990 114 H998 M990 112.5 V115.5 M998 112.5 V115.5" stroke="#3d9ae0" stroke-width="1"/>
<!-- sigma -->
<path d="M1083 70.5 H1071.5 L1077.5 77 L1071.5 83.8 H1083" stroke="#666" stroke-width="1.1"/>
<!-- fill down -->
<rect x="1069.5" y="92" width="15.5" height="13.5" fill="#fafafa" stroke="#6e6e6e" stroke-width="1"/>
<path d="M1069.5 94.5 H1085" stroke="#6e6e6e" stroke-width="1"/>
<path d="M1077.2 96.5 V103 M1074.8 100.7 L1077.2 103 L1079.6 100.7" stroke="#3d9ae0" stroke-width="1.1"/>
<!-- eraser -->
<path d="M1069.5 121 L1077.3 113.3 L1084 119.8 L1076.3 127.5 Z" fill="#fafafa" stroke="#cc49c8" stroke-width="1.1"/>
<path d="M1069.5 121 L1073.2 117.3 L1079.9 123.9 L1076.3 127.5 Z" fill="#e9a6e6" stroke="#cc49c8" stroke-width="1.1"/>
<!-- sort -->
<path d="M1106.5 84 L1111 71.8 L1115.5 84 M1108 80 H1114" stroke="#3d9ae0" stroke-width="1.2"/>
<path d="M1106.5 86.3 H1115 L1106.5 97.5 H1115.5" stroke="#666" stroke-width="1.1"/>
<path d="M1118.5 78.5 H1134 L1128 86.5 V93.5 H1124.5 V86.5 Z" fill="#fafafa" stroke="#666" stroke-width="1"/>
<!-- find -->
<circle cx="1173.6" cy="81.4" r="10.2" fill="#fafafa" stroke="#666" stroke-width="1"/>
<path d="M1166.3 88.7 L1155.3 99.7" stroke="#666" stroke-width="1"/>

<!-- formula bar -->
<g fill="#999" stroke="none"><path d="M73.3 147.5 L76.5 141.5 L79.8 147.5 Z"/><path d="M73.3 153.4 L76.5 159 L79.8 153.4 Z"/></g>
<path d="M100.5 145.5 L110.5 155.5 M110.5 145.5 L100.5 155.5" stroke="#cfcfcf" stroke-width="1.3"/>
<path d="M128.8 150.2 L133.2 154.8 L141.2 145.8" stroke="#cfcfcf" stroke-width="1.3"/>
<text x="158.5" y="154.5" font-family="Liberation Serif" font-style="italic" font-size="16.5" fill="#444" stroke="none">fx</text>
<path d="M180.5 143.5 V157.5" stroke="#ddd" stroke-width="1"/>
<path d="M1200 147 H1207 L1203.5 152 Z" fill="#555" stroke="none"/>
<!-- corner triangle -->
<path d="M4.2 195.5 L29.7 170.2 V195.5 Z" fill="#dcdcdc" stroke="none"/>

<!-- sheet tabs -->
<path d="M15 671.8 L22 666.5 V677.2 Z" fill="#bdbdbd" stroke="none"/>
<path d="M45 671.8 L38 666.5 V677.2 Z" fill="#bdbdbd" stroke="none"/>
<path d="M159 666 V676.5 M153.7 671.2 H164.3" stroke="#444" stroke-width="1.6" stroke-linecap="butt"/>

<!-- status icons -->
<g stroke="none" fill="#fff">
<rect x="902" y="689" width="13" height="13" rx="1"/>
</g>
<g stroke="#a9a9a9" stroke-width="1.2" stroke-linecap="butt"><path d="M902 693.3 H915 M902 697.6 H915 M906.3 689 V702 M910.6 689 V702"/></g>
<g stroke="#666" stroke-width="1" stroke-linecap="butt">
<rect x="937.3" y="689.5" width="13.5" height="12"/><rect x="939.5" y="691.5" width="9" height="8"/><path d="M941.5 693.5 H946.5 M941.5 695.5 H946.5 M941.5 697.5 H946.5"/>
<rect x="973.3" y="689.5" width="13.5" height="12"/><path d="M973.3 697 H982 V689.5 M977.8 689.5 V697"/>
</g>
<path d="M1006.5 695 H1013.5" stroke="#555" stroke-width="1.5" stroke-linecap="butt"/>
<path d="M1022 696.2 H1119" stroke="#9a9a9a" stroke-width="3.5"/>
<path d="M1110 693 V699" stroke="#9a9a9a" stroke-width="1"/>
<circle cx="1078" cy="695.8" r="7.6" fill="#fff" stroke="#d0d0d0" stroke-width="0.6"/>
<path d="M1132 691 V699.3 M1128 695.2 H1136.2" stroke="#555" stroke-width="1.6" stroke-linecap="butt"/>
</svg>

<div class="a" style="left:995px;top:679px;font-size:13.6px;color:rgba(255,255,255,0.93);white-space:nowrap">安全客</div>
<div class="a" style="left:1037px;top:679px;font-size:15px;color:rgba(255,255,255,0.93);white-space:nowrap">(</div>
<div class="a" style="left:1051px;top:680px;font-size:15px;color:rgba(255,255,255,0.93);white-space:nowrap">www.anquanke.com</div>
<div class="a" style="left:1191px;top:679px;font-size:15px;color:rgba(255,255,255,0.93);white-space:nowrap">)</div>
</div>
</body></html>
